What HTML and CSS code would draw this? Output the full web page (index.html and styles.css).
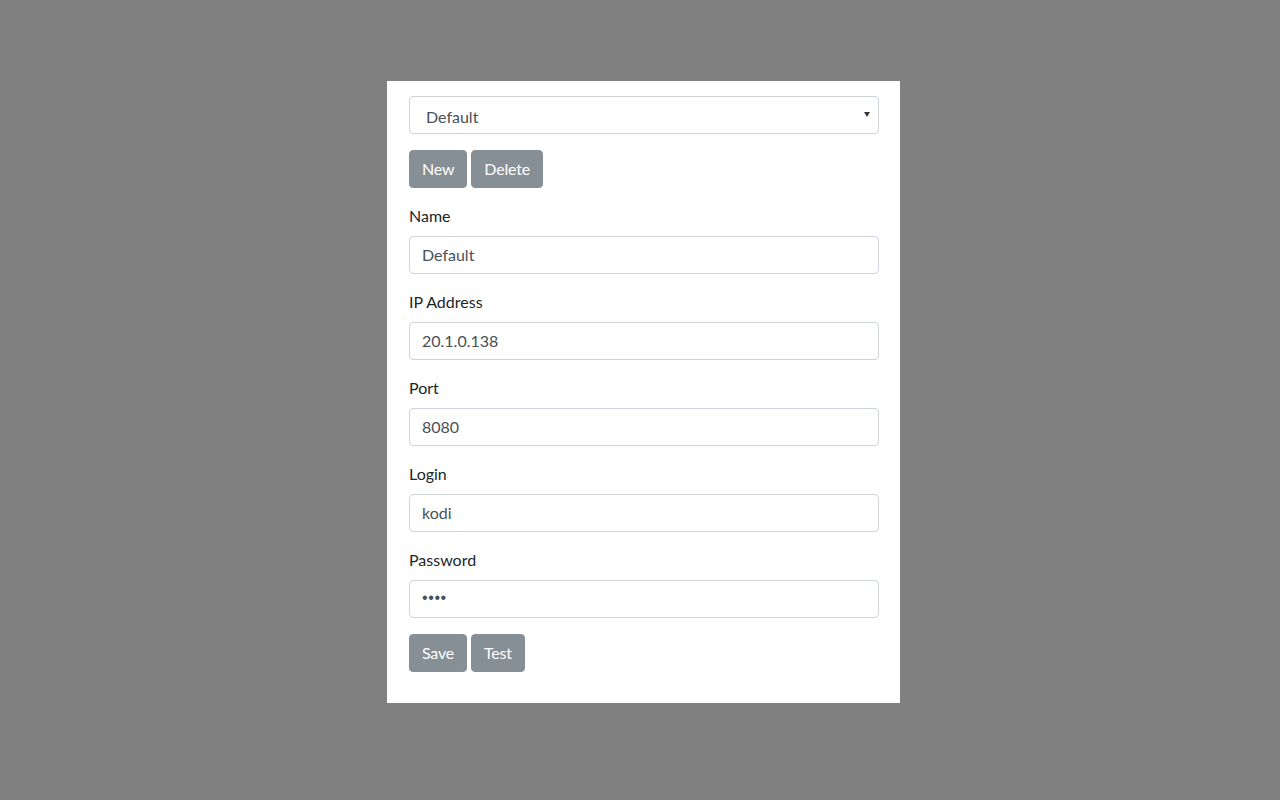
FILE: index.html
```html
<!DOCTYPE html>
<html lang="en">
<head>
<meta charset="utf-8">
<title>Kodi settings</title>
<link rel="stylesheet" href="styles.css">
</head>
<body>
<div class="panel">
  <div class="select">
    <span class="select-value">Default</span>
    <svg class="caret" width="6" height="5" viewBox="0 0 6 5"><path d="M0 0H6L3 5Z" fill="#343a40"/></svg>
  </div>
  <div class="btn-row">
    <button class="btn">New</button>
    <button class="btn">Delete</button>
  </div>
  <div class="group">
    <label class="label">Name</label>
    <input class="input" type="text" value="Default">
  </div>
  <div class="group">
    <label class="label">IP Address</label>
    <input class="input" type="text" value="20.1.0.138">
  </div>
  <div class="group">
    <label class="label">Port</label>
    <input class="input" type="text" value="8080">
  </div>
  <div class="group">
    <label class="label">Login</label>
    <input class="input" type="text" value="kodi">
  </div>
  <div class="group">
    <label class="label">Password</label>
    <input class="input password" type="password" value="kodi">
  </div>
  <div class="btn-row">
    <button class="btn">Save</button>
    <button class="btn">Test</button>
  </div>
</div>
</body>
</html>
```
FILE: styles.css
```css
* { box-sizing: border-box; }
html, body {
  margin: 0;
  height: 100%;
}
body {
  background: #808080;
  font-family: Lato, "Noto Sans", sans-serif;
  font-size: 16px;
  line-height: 1.5;
  color: #212529;
}
.panel {
  width: 513px;
  margin: 81px 0 0 387px;
  background: #fff;
  padding: 15px 21px 15px 22px;
}
.select {
  display: flex;
  align-items: center;
  justify-content: space-between;
  height: 38px;
  border: 1px solid #ced4da;
  border-radius: 4px;
  padding: 0 8px 0 16px;
  color: #495057;
  margin-bottom: 16px;
}
.select-value { padding-top: 4px; }
.caret { display: block; margin-top: -2px; }
.btn-row {
  display: flex;
  gap: 4px;
  margin-bottom: 16px;
}
.btn {
  font: inherit;
  line-height: 24px;
  height: 38px;
  padding: 6px 12px;
  border: 1px solid #868e96;
  background: #868e96;
  color: #fff;
  border-radius: 4px;
  letter-spacing: -0.2px;
}
.group {
  margin-bottom: 16px;
}
.label {
  display: block;
  margin-bottom: 8px;
  line-height: 24px;
}
.input {
  display: block;
  width: 100%;
  height: 38px;
  padding: 5px 12px 7px;
  font: inherit;
  color: #495057;
  border: 1px solid #ced4da;
  border-radius: 4px;
  background: #fff;
}
.input.password {
  font-family: "Liberation Sans", sans-serif;
  letter-spacing: 0.6px;
}
```
